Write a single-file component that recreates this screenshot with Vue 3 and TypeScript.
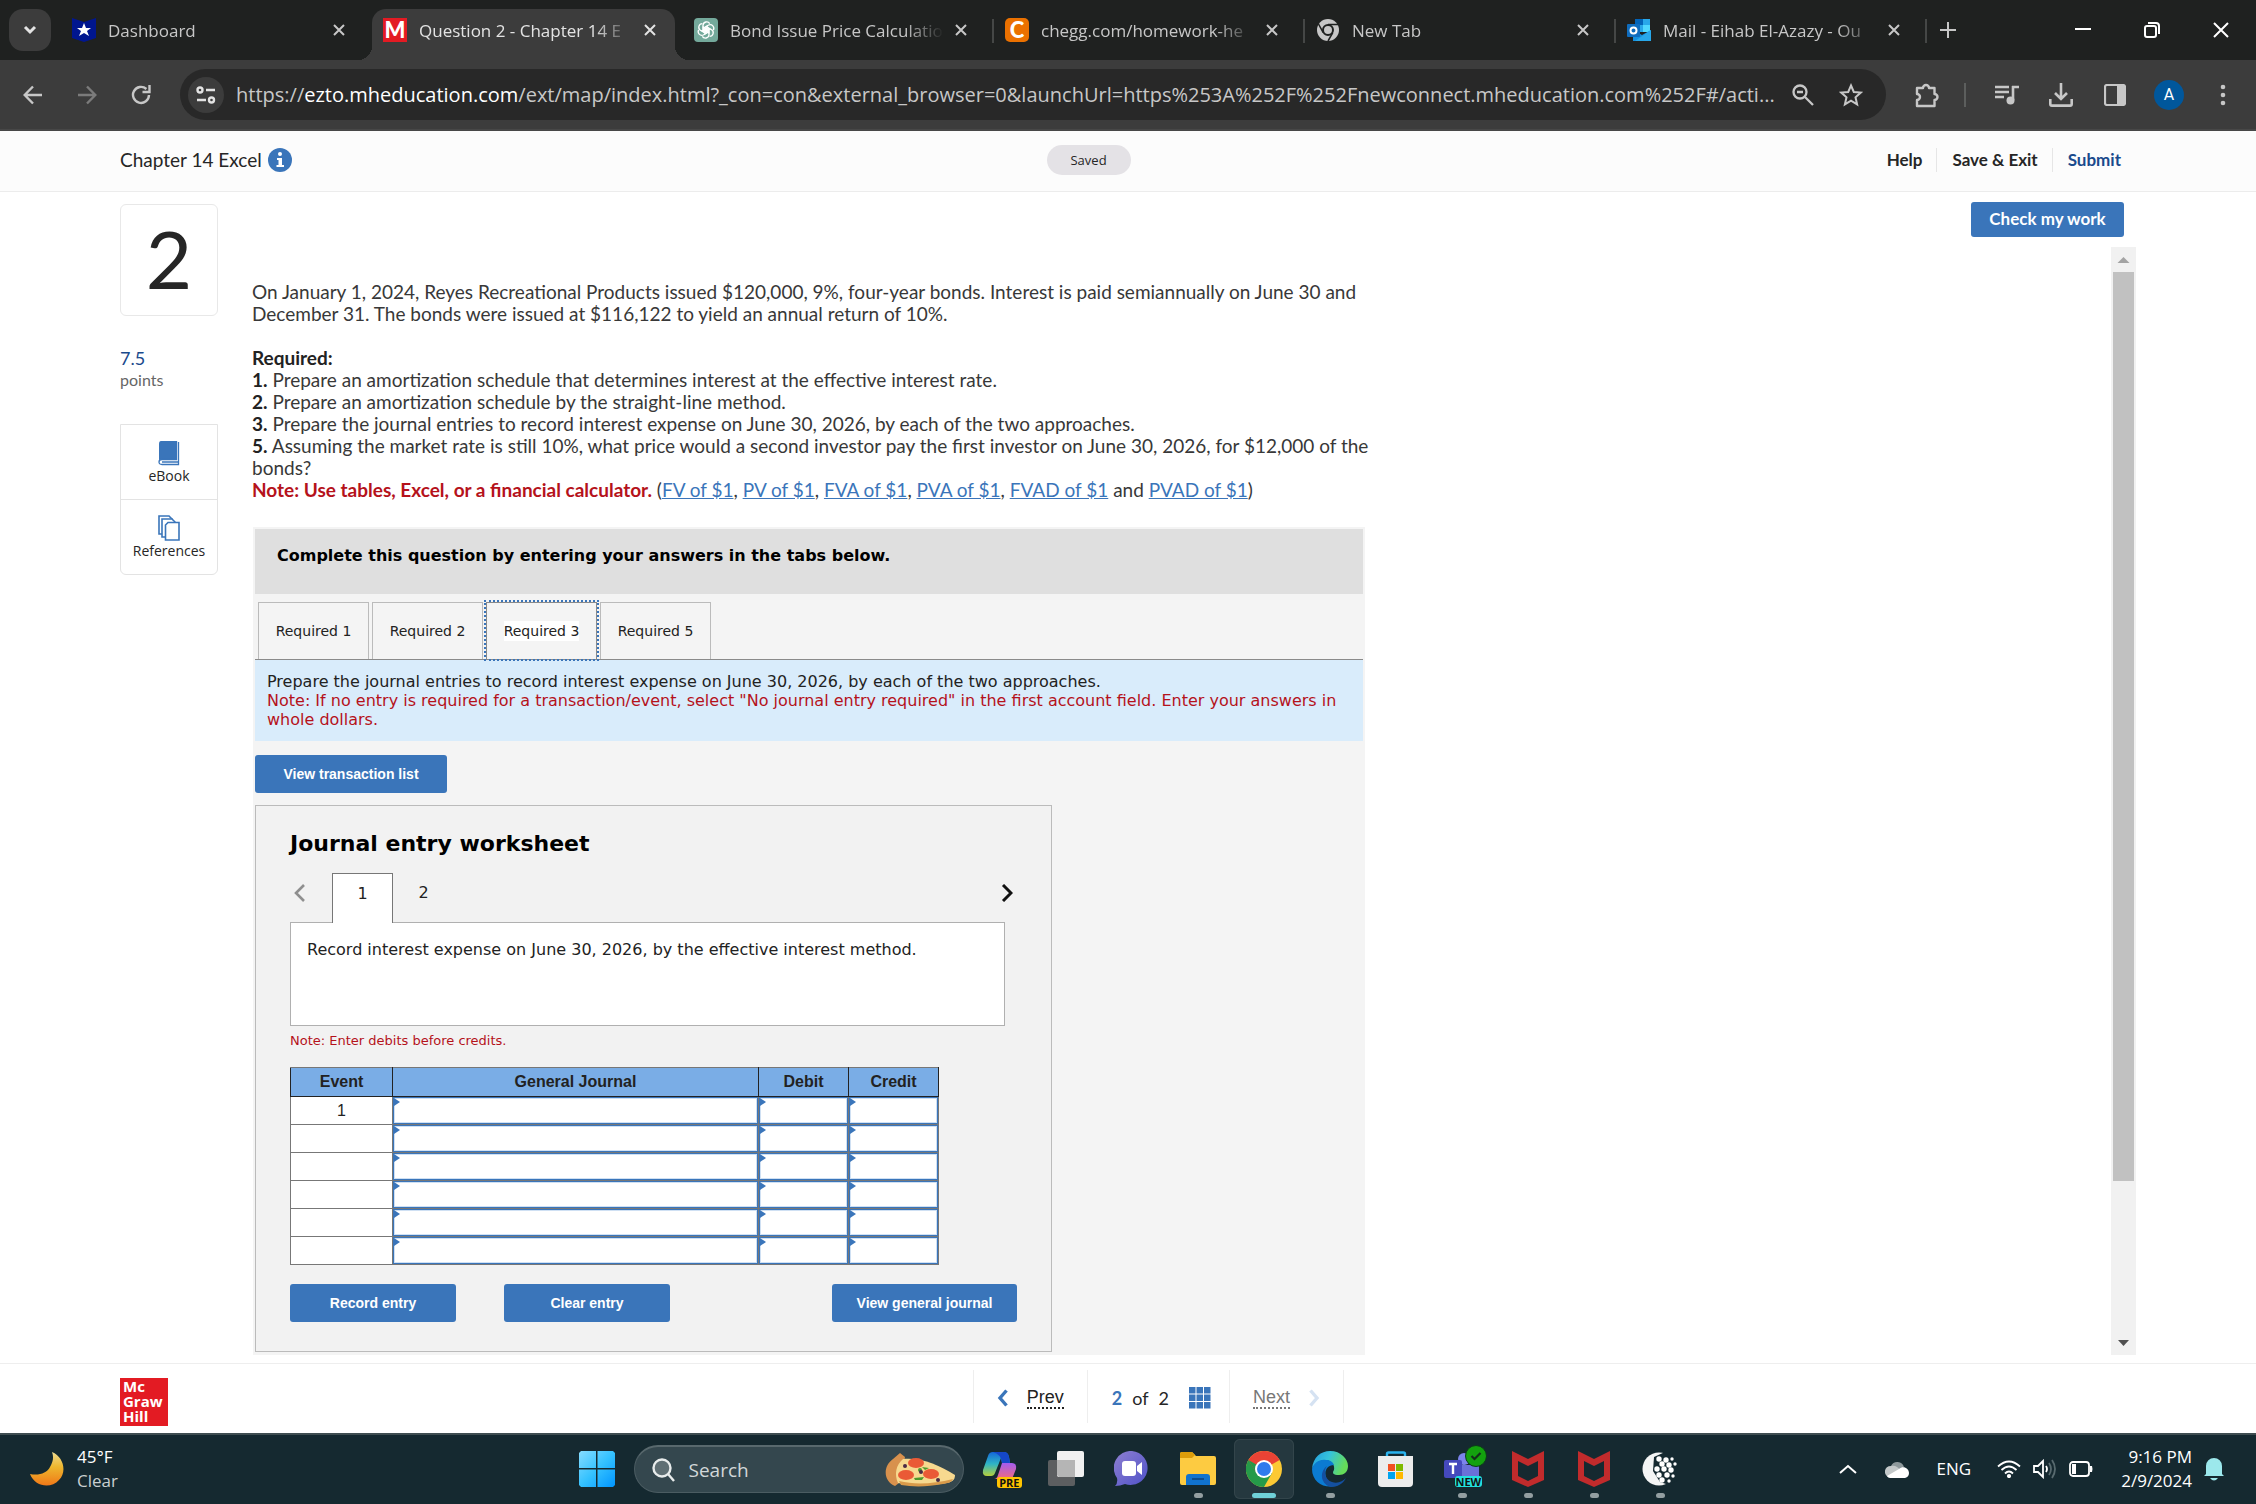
<script setup lang="ts">
import { ref } from 'vue'

interface BrowserTab {
  title: string
  icon: 'star' | 'mh' | 'gpt' | 'chegg' | 'chrome' | 'outlook'
  active?: boolean
  divider?: boolean
}

const browserTabs: BrowserTab[] = [
  { title: 'Dashboard', icon: 'star' },
  { title: 'Question 2 - Chapter 14 E', icon: 'mh', active: true },
  { title: 'Bond Issue Price Calculatio', icon: 'gpt', divider: true },
  { title: 'chegg.com/homework-he', icon: 'chegg', divider: true },
  { title: 'New Tab', icon: 'chrome', divider: true },
  { title: 'Mail - Eihab El-Azazy - Ou', icon: 'outlook', divider: true },
]

const tableLinks = ['FV of $1', 'PV of $1', 'FVA of $1', 'PVA of $1', 'FVAD of $1', 'PVAD of $1']

const requirementTabs = ['Required 1', 'Required 2', 'Required 3', 'Required 5']
const currentRequirement = ref('Required 3')

const rows = ref(
  Array.from({ length: 6 }, (_, i) => ({ event: i === 0 ? '1' : '', account: '', debit: '', credit: '' })),
)
const fields = ['account', 'debit', 'credit'] as const

function clearEntry(): void {
  rows.value.forEach((row) => {
    row.account = row.debit = row.credit = ''
  })
}

/* Dots of the WebMoney globe: x, y, radius */
const globeDots = [
  [17, 8, 2], [24, 9, 2], [30, 8, 1], [20, 13, 2], [27, 14, 2], [33, 13, 1],
  [15, 18, 2], [22, 18, 2], [29, 19, 2], [17, 24, 2], [25, 24, 2], [31, 25, 1], [20, 29, 2], [27, 30, 1],
]
</script>

<template>
  <div class="screen">
    <header class="tabstrip">
      <button class="tab-menu" aria-label="Search tabs">
        <svg width="14" height="10" viewBox="0 0 14 10"><path d="M2 2l5 5 5-5" fill="none" stroke="#e3e3e3" stroke-width="3" /></svg>
      </button>
      <div v-for="tab in browserTabs" :key="tab.title" class="btab" :class="{ active: tab.active, divider: tab.divider }">
        <svg v-if="tab.icon === 'star'" class="fav" viewBox="0 0 24 24">
          <path d="M0 0l12 4L24 0v20l-12 4L0 20z" fill="#00168f" />
          <path d="M12 5l2 5h5l-4 3 2 5-5-3-5 3 2-5-4-3h5z" fill="#fff" />
        </svg>
        <span v-else-if="tab.icon === 'mh'" class="fav letter mh">M</span>
        <svg v-else-if="tab.icon === 'gpt'" class="fav" viewBox="0 0 24 24">
          <rect width="24" height="24" rx="4" fill="#74a99b" />
          <g fill="none" stroke="#fff" stroke-width="1.3">
            <path v-for="n in 6" :key="n" :transform="`rotate(${n * 60} 12 12)`" d="M9 13.600V7.200a3.600 3.600 0 0 1 6.700-1.500M9.200 9.400l5.600 3.200v3.200" />
          </g>
        </svg>
        <span v-else-if="tab.icon === 'chegg'" class="fav letter chegg">C</span>
        <svg v-else-if="tab.icon === 'chrome'" class="fav" viewBox="0 0 24 24">
          <circle cx="12" cy="12" r="11" fill="#c7c7c7" />
          <path d="M12 6.500h10M7.200 14.700L2.500 6M16.800 14.700L12 23" stroke="#1f2120" stroke-width="1.500" />
          <circle cx="12" cy="12" r="5" fill="#c7c7c7" stroke="#1f2120" stroke-width="2" />
        </svg>
        <svg v-else class="fav" viewBox="0 0 24 24">
          <path d="M8 1h15v13H8z" fill="#28a8ea" /><path d="M8 1h8v6H8z" fill="#0364b8" />
          <path d="M16 7h7v7h-7z" fill="#50d9ff" /><path d="M6 12l9 5 9-5v11H6z" fill="#1490df" />
          <path d="M24 12v11H8z" fill="#28a8ea" /><rect y="6" width="13" height="13" rx="1" fill="#0f6cbd" />
          <circle cx="6.500" cy="12.500" r="3" fill="none" stroke="#fff" stroke-width="2" />
        </svg>
        <span class="btab-title">{{ tab.title }}</span>
        <button class="btab-close" aria-label="Close tab">
          <svg width="14" height="14" viewBox="0 0 14 14"><path d="M2 2l10 10M12 2L2 12" stroke="currentColor" stroke-width="2" /></svg>
        </button>
      </div>
      <button class="new-tab" aria-label="New tab">
        <svg width="16" height="16" viewBox="0 0 16 16"><path d="M8 0v16M0 8h16" stroke="#c7c7c7" stroke-width="2" /></svg>
      </button>
      <div class="window-controls">
        <button aria-label="Minimize"><svg width="16" height="16" viewBox="0 0 16 16"><path d="M0 7h16" stroke="#fff" stroke-width="2" /></svg></button>
        <button aria-label="Restore"><svg width="16" height="16" viewBox="0 0 16 16" fill="none" stroke="#fff" stroke-width="2"><rect x="1" y="4" width="11" height="11" rx="2" /><path d="M4 1h8q3 0 3 3v8" /></svg></button>
        <button aria-label="Close"><svg width="16" height="16" viewBox="0 0 16 16"><path d="M1 1l14 14M15 1L1 15" stroke="#fff" stroke-width="2" /></svg></button>
      </div>
    </header>

    <nav class="toolbar" aria-label="Browser toolbar">
      <button class="tool" aria-label="Back"><svg width="20" height="20" viewBox="0 0 20 20" fill="none" stroke="#c7c7c7" stroke-width="2.400"><path d="M19 10H2M10 1.500L1.700 10l8.300 8.500" /></svg></button>
      <button class="tool" aria-label="Forward"><svg width="20" height="20" viewBox="0 0 20 20" fill="none" stroke="#7b7b7b" stroke-width="2.400"><path d="M1 10h17M10 1.500l8.300 8.500-8.300 8.500" /></svg></button>
      <button class="tool" aria-label="Reload"><svg width="20" height="20" viewBox="0 0 20 20" fill="none" stroke="#c7c7c7" stroke-width="2.400"><path d="M18 10a8 8 0 1 1-2.600-6" /><path d="M18.500 0v7h-7" /></svg></button>
      <div class="omnibox">
        <button class="site-info" aria-label="Site information">
          <svg width="20" height="18" viewBox="0 0 20 18" fill="none" stroke="#e3e3e3" stroke-width="2.400"><circle cx="4" cy="4" r="2.500" /><path d="M10 4h9M1 14h9" /><circle cx="15.500" cy="14" r="2.500" /></svg>
        </button>
        <div class="url">https://<b>ezto.mheducation.com</b>/ext/map/index.html?_con=con&amp;external_browser=0&amp;launchUrl=https%253A%252F%252Fnewconnect.mheducation.com%252F#/acti...</div>
        <button class="tool" aria-label="Zoom"><svg width="22" height="22" viewBox="0 0 22 22" fill="none" stroke="#c7c7c7" stroke-width="2.300"><circle cx="8" cy="8" r="6.500" /><path d="M13 13l8 8M5 8h6" /></svg></button>
        <button class="tool" aria-label="Bookmark"><svg width="24" height="24" viewBox="0 0 24 24" fill="none" stroke="#c7c7c7" stroke-width="2"><path d="M12 2.500l2.800 6.500 7 .600-5.300 4.700 1.600 7L12 17.600l-6.100 3.700 1.600-7L2.200 9.600l7-.600z" /></svg></button>
      </div>
      <button class="tool ext" aria-label="Extensions"><svg width="26" height="26" viewBox="0 0 26 26"><path d="M3 6h6a3 3 0 0 1 6 0h5.500v6a3 3 0 0 1 0 6v6H3v-6a3 3 0 0 0 0-6z" fill="none" stroke="#c7c7c7" stroke-width="2.400" stroke-linejoin="round" /></svg></button>
      <span class="tool-divider"></span>
      <button class="tool" aria-label="Media"><svg width="24" height="20" viewBox="0 0 24 20"><path d="M0 2h14M0 7h14M0 12h9" stroke="#c7c7c7" stroke-width="2.400" /><path d="M18 1v14M17 2h7" stroke="#c7c7c7" stroke-width="2.600" /><circle cx="15.500" cy="15.500" r="4" fill="#c7c7c7" /></svg></button>
      <button class="tool" aria-label="Downloads"><svg width="24" height="24" viewBox="0 0 24 24" fill="none" stroke="#c7c7c7" stroke-width="2.600"><path d="M12 0v15M6 10l6 6 6-6M1.300 16v5q0 1.600 1.600 1.600h18.200q1.600 0 1.600-1.600v-5" /></svg></button>
      <button class="tool" aria-label="Side panel"><svg width="22" height="22" viewBox="0 0 22 22"><rect x="1" y="1" width="20" height="20" rx="2" fill="none" stroke="#c7c7c7" stroke-width="2.200" /><path d="M13 1h8v20h-8z" fill="#c7c7c7" /></svg></button>
      <button class="tool" aria-label="Profile"><span class="avatar">A</span></button>
      <button class="tool" aria-label="Menu"><svg width="6" height="22" viewBox="0 0 6 22" fill="#c7c7c7"><circle cx="3" cy="3" r="2.300" /><circle cx="3" cy="11" r="2.300" /><circle cx="3" cy="19" r="2.300" /></svg></button>
    </nav>

    <header class="app-header">
      <h1 class="chapter">Chapter 14 Excel
        <svg width="24" height="24" viewBox="0 0 24 24"><circle cx="12" cy="12" r="12" fill="#3a75ba" /><circle cx="12" cy="6" r="2" fill="#fff" /><path d="M9 10h5v7h2v2H8.500v-2h2v-5H9z" fill="#fff" /></svg>
      </h1>
      <span class="saved">Saved</span>
      <div class="header-links">
        <button>Help</button>
        <button>Save &amp; Exit</button>
        <button class="submit">Submit</button>
      </div>
    </header>

    <main class="workspace">
      <aside class="rail">
        <div class="number">2</div>
        <p class="points"><span>7.5</span><br />points</p>
        <div class="resources">
          <button>
            <svg width="22" height="26" viewBox="0 0 22 26"><path d="M3 1h15v18H4q-3 0-3 3V4q0-3 2-3z" fill="#3a75ba" /><path d="M20.500 2v22.500H4q-3 0-3-2.500t3-2.500h14.500V1M4 22h16" fill="none" stroke="#3a75ba" stroke-width="1.300" /></svg>
            eBook
          </button>
          <button>
            <svg width="22" height="26" viewBox="0 0 22 26" fill="#fff" stroke="#3a75ba" stroke-width="1.600"><path d="M1 1h10l3 3v15H1z" /><path d="M4 4h10l3 3v15H4z" /><path d="M10 7.500h11V25H7.500V10z" /></svg>
            References
          </button>
        </div>
      </aside>

      <section class="question">
        <button class="primary check">Check my work</button>
        <div class="scroller">
          <article class="sheet">
            <p class="prose">On January 1, 2024, Reyes Recreational Products issued $120,000, 9%, four-year bonds. Interest is paid semiannually on June 30 and<br />December 31. The bonds were issued at $116,122 to yield an annual return of 10%.</p>
            <p class="prose">
              <strong>Required:</strong><br />
              <strong>1.</strong> Prepare an amortization schedule that determines interest at the effective interest rate.<br />
              <strong>2.</strong> Prepare an amortization schedule by the straight-line method.<br />
              <strong>3.</strong> Prepare the journal entries to record interest expense on June 30, 2026, by each of the two approaches.<br />
              <strong>5.</strong> Assuming the market rate is still 10%, what price would a second investor pay the first investor on June 30, 2026, for $12,000 of the<br />bonds?<br />
              <strong class="alert">Note: Use tables, Excel, or a financial calculator.</strong>
              (<template v-for="(link, i) in tableLinks" :key="link"><a href="#">{{ link }}</a><template v-if="i < 4">, </template><template v-else-if="i === 4"> and </template></template>)
            </p>

            <div class="panel">
              <h2 class="panel-head">Complete this question by entering your answers in the tabs below.</h2>
              <div class="req-tabs" role="tablist">
                <button
                  v-for="name in requirementTabs" :key="name" role="tab"
                  :aria-selected="name === currentRequirement" :class="{ current: name === currentRequirement }"
                  @click="currentRequirement = name"
                ><span>{{ name }}</span></button>
              </div>
              <p class="instructions">Prepare the journal entries to record interest expense on June 30, 2026, by each of the two approaches.<br />
                <span>Note: If no entry is required for a transaction/event, select "No journal entry required" in the first account field. Enter your answers in<br />whole dollars.</span>
              </p>
              <button class="primary action view-list">View transaction list</button>

              <div class="worksheet">
                <h3>Journal entry worksheet</h3>
                <div class="pager">
                  <button class="arrow" aria-label="Previous entry"><svg width="12" height="18" viewBox="0 0 12 18"><path d="M10 1L2 9l8 8" fill="none" stroke="#8f8f8f" stroke-width="2.600" /></svg></button>
                  <button class="page current">1</button>
                  <button class="page">2</button>
                  <button class="arrow next" aria-label="Next entry"><svg width="12" height="18" viewBox="0 0 12 18"><path d="M2 1l8 8-8 8" fill="none" stroke="#111" stroke-width="3" /></svg></button>
                </div>
                <div class="transaction">Record interest expense on June 30, 2026, by the effective interest method.</div>
                <p class="hint">Note: Enter debits before credits.</p>
                <table>
                  <thead>
                    <tr><th class="c-event">Event</th><th class="c-journal">General Journal</th><th class="c-amount">Debit</th><th class="c-amount">Credit</th></tr>
                  </thead>
                  <tbody>
                    <tr v-for="(row, r) in rows" :key="r">
                      <td class="event">{{ row.event }}</td>
                      <td v-for="field in fields" :key="field" class="cell"><input v-model="row[field]" :aria-label="`${field}, row ${r + 1}`" /></td>
                    </tr>
                  </tbody>
                </table>
                <div class="actions">
                  <button class="primary action entry">Record entry</button>
                  <button class="primary action entry" @click="clearEntry">Clear entry</button>
                  <button class="primary action general">View general journal</button>
                </div>
              </div>
            </div>
          </article>
          <div class="scrollbar" aria-hidden="true">
            <svg width="25" height="25" viewBox="0 0 25 25"><path d="M12.500 10l6 6h-12z" fill="#a3a3a3" /></svg>
            <span class="thumb"></span>
            <svg width="25" height="25" viewBox="0 0 25 25"><path d="M7 10h11l-5.500 6z" fill="#505050" /></svg>
          </div>
        </div>
      </section>
    </main>

    <footer class="app-footer">
      <div class="logo">Mc<br />Graw<br />Hill</div>
      <nav class="question-nav" aria-label="Questions">
        <a href="#" class="prev"><svg width="12" height="18" viewBox="0 0 12 18"><path d="M9.500 1.500L3 9l6.500 7.500" fill="none" stroke="#3a75ba" stroke-width="3.400" /></svg><span>Prev</span></a>
        <div class="count"><b>2</b><span>of</span><i>2</i>
          <svg width="22" height="22" viewBox="0 0 22 22" fill="#3a75ba"><template v-for="y in 3" :key="y"><rect v-for="x in 3" :key="x" :x="(x - 1) * 7.500" :y="(y - 1) * 7.500" width="6.500" height="6.500" /></template></svg>
        </div>
        <a href="#" class="next"><span>Next</span><svg width="12" height="18" viewBox="0 0 12 18"><path d="M2.500 1.500L9 9l-6.500 7.500" fill="none" stroke="#d5e2f2" stroke-width="3.400" /></svg></a>
      </nav>
    </footer>

    <footer class="taskbar">
      <div class="weather">
        <svg width="34" height="34" viewBox="0 0 34 34">
          <defs><linearGradient id="moon" x1="0" y1="0" x2="0" y2="1"><stop offset="0" stop-color="#f0dc90" /><stop offset=".45" stop-color="#edb62d" /><stop offset="1" stop-color="#f07818" /></linearGradient></defs>
          <path d="M22 0C34 5 37 20 29 28 21 37 5 35 0 22c9 2 17-1 20-7 3-5 4-10 2-15z" fill="url(#moon)" />
        </svg>
        <div>45°F<br /><span>Clear</span></div>
      </div>
      <div class="apps">
        <button class="app start" aria-label="Start">
          <svg width="36" height="36" viewBox="0 0 36 36">
            <defs><linearGradient id="win" x1="0" y1="0" x2="1" y2="1"><stop offset="0" stop-color="#86dcff" /><stop offset=".5" stop-color="#35c2ff" /><stop offset="1" stop-color="#0095ff" /></linearGradient></defs>
            <path d="M2 0h15v17H0V2zM18.500 0H34l2 2v15H18.500zM0 18.500h17V36H2l-2-2zM18.500 18.500H36V34l-2 2H18.500z" fill="url(#win)" />
          </svg>
        </button>
        <label class="search">
          <svg width="24" height="24" viewBox="0 0 24 24" fill="none" stroke="#e8ecec" stroke-width="2.400"><circle cx="10" cy="10" r="8.500" fill="#5f6f74" /><path d="M16 16l6 7" /></svg>
          <input placeholder="Search" aria-label="Search" />
          <svg width="70" height="34" viewBox="0 0 70 34">
            <path d="M8 6l7-6 5 4-1 5C13 13 12 22 14 30l-4 3C-1 29-3 14 8 6z" fill="#d8914d" />
            <path d="M18 6c18-2 36 6 52 16 0 5-3 7-8 8-18 3-34 3-49 0-4-9-2-18 5-24z" fill="#f7d98f" />
            <path d="M14 28c16 4 34 3 54-2-2 4-5 4-10 5-16 3-30 3-42 1z" fill="#d99a4a" />
            <g fill="#ea5a36"><ellipse cx="31" cy="10" rx="8" ry="5" /><ellipse cx="21" cy="22" rx="8" ry="5" /><ellipse cx="46" cy="21" rx="8" ry="5" /></g>
            <g fill="#4d9a2c"><circle cx="35" cy="17" r="2" /><path d="M29 25l10-1-2 3h-7z" /><path d="M37 14l7 1-4 2z" /></g>
            <g fill="#4b2b45"><circle cx="20" cy="13" r="2" /><circle cx="36" cy="19" r="2" /><circle cx="53" cy="27" r="2" /></g>
          </svg>
        </label>
        <button class="app" aria-label="Copilot">
          <svg width="36" height="36" viewBox="0 0 36 36">
            <defs>
              <linearGradient id="cpa" x1="0" y1="0" x2="0" y2="1"><stop offset="0" stop-color="#1467d8" /><stop offset=".5" stop-color="#2fb5c5" /><stop offset="1" stop-color="#b6cf3a" /></linearGradient>
              <linearGradient id="cpb" x1="0" y1="0" x2="0" y2="1"><stop offset="0" stop-color="#a35cf0" /><stop offset="1" stop-color="#f06a7e" /></linearGradient>
            </defs>
            <path d="M11 1h11q4 0 5 5l1 6h-8l-1-5-6 15q-1 3-4 3H5q-5 0-4-6L6 5q1-4 5-4z" fill="url(#cpa)" />
            <path d="M11 1h11q4 0 5 5l1 6h-8q-1-9-9-11z" fill="#1547c8" />
            <path d="M20 12h10q5 0 4 6l-4 10H12q3 0 4-4z" fill="url(#cpb)" />
          </svg>
          <span class="tag pre">PRE</span>
        </button>
        <button class="app" aria-label="Task view">
          <svg width="36" height="36" viewBox="0 0 36 36"><rect y="9" width="27" height="26" rx="2" fill="#5c5e60" /><rect x="9" width="27" height="26" rx="2" fill="#f1f1f1" /><path d="M9 9h18v17H11l-2-2z" fill="#b5b5b5" /></svg>
        </button>
        <button class="app" aria-label="Chat">
          <svg width="36" height="36" viewBox="0 0 36 36"><defs><linearGradient id="chat" x1="0" y1="0" x2="1" y2="1"><stop offset="0" stop-color="#8e7fd0" /><stop offset="1" stop-color="#4f52c9" /></linearGradient></defs><path d="M18 0a17 17 0 1 1-7 33q-5 2-10 2 3-3 2-8A17 17 0 0 1 18 0z" fill="url(#chat)" /><rect x="8" y="10" width="14" height="15" rx="3" fill="#fff" /><path d="M23 15l5-4v13l-5-4z" fill="#fff" /></svg>
        </button>
        <button class="app running" aria-label="File Explorer">
          <svg width="36" height="36" viewBox="0 0 36 36"><path d="M0 3q0-2 2-2h10l4 4h18q2 0 2 2v25q0 2-2 2H2q-2 0-2-2z" fill="#fdcb41" /><path d="M0 3q0-2 2-2h10l3 3-3 3H0z" fill="#dd9d0a" /><path d="M6 34V26q0-3 3-3h18q3 0 3 3v8z" fill="#1173cf" /><path d="M12 28h12" stroke="#0b4d92" stroke-width="2" /></svg>
        </button>
        <button class="app focused" aria-label="Chrome">
          <svg width="36" height="36" viewBox="0 0 36 36"><circle cx="18" cy="18" r="18" fill="#fcc934" /><path d="M18 18L2.400 9A18 18 0 0 1 33.600 9z" fill="#ea4335" /><path d="M2.400 9a18 18 0 0 0 15.600 27l8-14-8-4z" fill="#259a49" /><path d="M18 9h15.600L18 4 2.400 9l8 13z" fill="#ea4335" /><path d="M2.400 9l8 13L18 18z" fill="#259a49" /><circle cx="18" cy="18" r="9" fill="#fff" /><circle cx="18" cy="18" r="7" fill="#2f7bed" /></svg>
        </button>
        <button class="app running" aria-label="Edge">
          <svg width="36" height="36" viewBox="0 0 36 36">
            <defs><linearGradient id="edge" x1="0" y1="0" x2="1" y2=".3"><stop offset="0" stop-color="#219bdf" /><stop offset=".5" stop-color="#36c3da" /><stop offset="1" stop-color="#65dc59" /></linearGradient></defs>
            <path d="M0 18C1 6 9 0 18 0c11 0 18 8 18 15 0 6-4 9-9 9-6 0-7-2-5-5 1-5-2-9-8-10C7 9 2 13 0 18z" fill="url(#edge)" />
            <path d="M0 18C2 12 7 8 14 9c4 0 7 2 8 5-7 0-10 6-8 12 2 5 7 9 12 8-12 5-26-2-26-16z" fill="#0b7bd2" />
            <path d="M15 15c-4 5-2 14 5 16 6 2 11-1 14-4-3 6-9 9-15 9-9-2-13-14-4-21z" fill="#1450a0" />
          </svg>
        </button>
        <button class="app" aria-label="Microsoft Store">
          <svg width="36" height="36" viewBox="0 0 36 36"><path d="M9 7V3q0-1.500 1.500-1.500h15Q27 1.500 27 3v4" fill="none" stroke="#2bb3ee" stroke-width="2.400" /><path d="M0 5h35v27q0 4-4 4H4q-4 0-4-4z" fill="#ececec" /><path d="M10 13h7v7h-7z" fill="#f25022" /><path d="M18 13h7v7h-7z" fill="#7fba00" /><path d="M10 21h7v7h-7z" fill="#00a4ef" /><path d="M18 21h7v7h-7z" fill="#ffb900" /></svg>
        </button>
        <button class="app running" aria-label="Teams">
          <svg width="36" height="36" viewBox="0 0 36 36"><circle cx="20" cy="8" r="6" fill="#7b83eb" /><path d="M13 14h22v15q0 4-4 4H13z" fill="#6a70d8" /><rect y="9" width="18" height="18" rx="2" fill="#4549bd" /><path d="M5 13h8M9 13v10" stroke="#fff" stroke-width="2.400" /></svg>
          <span class="tag new">NEW</span>
          <svg class="status" width="22" height="22" viewBox="0 0 22 22"><circle cx="11" cy="11" r="10.500" fill="#13a10e" stroke="#0c3b1a" /><path d="M6.500 11l3 3 6-6" fill="none" stroke="#12301a" stroke-width="2.200" /></svg>
        </button>
        <button v-for="n in 2" :key="n" class="app running" aria-label="McAfee">
          <svg width="36" height="36" viewBox="0 0 36 36"><path fill-rule="evenodd" d="M2 0l16 8 16-8v29l-16 7-16-7zM8 10v15l10 5 10-5V10l-10 5z" fill="#c12b2c" /></svg>
        </button>
        <button class="app running" aria-label="WebMoney">
          <svg width="36" height="36" viewBox="0 0 36 36"><circle cx="17" cy="18" r="16.500" fill="#f4f5f5" /><path d="M12 6l11-5h13v28l-9 5-9-3-7-11z" fill="#152930" /><circle v-for="(d, i) in globeDots" :key="i" :cx="d[0]" :cy="d[1]" :r="d[2] + 0.700" fill="#fff" /></svg>
        </button>
      </div>
      <div class="tray">
        <svg class="up" width="18" height="10" viewBox="0 0 18 10"><path d="M1 9l8-7 8 7" fill="none" stroke="#fff" stroke-width="2" /></svg>
        <svg class="cloud" width="24" height="18" viewBox="0 0 24 18"><path d="M6 6a7 7 0 0 1 13 1l-7 5z" fill="#8d989b" /><path d="M6 6c4-1 7 1 9 4L3 17C-2 14-1 6 6 6z" fill="#c3c8c9" /><path d="M14 9c4-4 10-1 10 4q0 4-4 5H5q-2 0-3-2z" fill="#fff" /></svg>
        <span class="lang">ENG</span>
        <svg width="24" height="18" viewBox="0 0 24 18" fill="none" stroke="#fff" stroke-width="1.800"><path d="M1 6.500q11-10 22 0M4.500 10q7.500-7 15 0M8 13.500q4-4 8 0" /><circle cx="12" cy="16" r="1.200" fill="#fff" /></svg>
        <svg width="24" height="20" viewBox="0 0 24 20" fill="none" stroke="#fff" stroke-width="1.800"><path d="M1 7h4l5-5v16l-5-5H1zM13 7q2 3 0 6" /><path d="M16 4q4 6 0 12M19 1q6 9 0 18" stroke="#586a6f" /></svg>
        <svg width="24" height="18" viewBox="0 0 24 18"><rect x="1" y="2" width="19" height="14" rx="3" fill="none" stroke="#fff" stroke-width="1.800" /><path d="M3 4h4v10H3zM21 6h2q1 3 0 6h-2z" fill="#fff" /></svg>
        <div class="clock">9:16 PM<br />2/9/2024</div>
        <svg width="20" height="24" viewBox="0 0 20 24" fill="#9ce8ec"><path d="M2 17V9a8 8 0 0 1 16 0v8l2 2H0zM6 21h8q-4 5-8 0z" /></svg>
      </div>
    </footer>
  </div>
</template>

<style>
body {
  background: #fff;
}
</style>

<style scoped>
* {
  box-sizing: border-box;
}
h1, h2, h3, p {
  margin: 0;
  font-weight: 400;
}
button {
  padding: 0;
  border: 0;
  background: none;
  color: inherit;
  font: inherit;
  cursor: pointer;
}
svg {
  display: block;
  flex: none;
}
.screen {
  display: flex;
  flex-direction: column;
  min-height: 100vh;
  font-family: Lato, sans-serif;
  color: #262626;
}

/* Browser tab strip */
.tabstrip {
  display: flex;
  align-items: flex-end;
  height: 60px;
  background: #1f2120;
  color: #c7c7c7;
  font: 17px/28px "Open Sans", sans-serif;
}
.tab-menu {
  display: grid;
  place-items: center;
  width: 42px;
  height: 42px;
  margin: 0 10px 9px 9px;
  border-radius: 14px;
  background: #3c3c3c;
}
.btab {
  position: relative;
  display: flex;
  align-items: center;
  width: 303px;
  height: 51px;
  margin-right: 8px;
  padding: 0 12px 9px 11px;
}
.btab.active {
  border-radius: 14px 14px 0 0;
  background: #3c3c3c;
  color: #e3e3e3;
}
.btab.active::before,
.btab.active::after {
  content: "";
  position: absolute;
  bottom: 0;
  width: 14px;
  height: 14px;
}
.btab.active::before {
  right: 100%;
  background: radial-gradient(circle at 0 0, #1f2120 14px, #3c3c3c 14px);
}
.btab.active::after {
  left: 100%;
  background: radial-gradient(circle at 100% 0, #1f2120 14px, #3c3c3c 14px);
}
.btab.divider::after {
  content: "";
  position: absolute;
  right: -8px;
  top: 10px;
  width: 2px;
  height: 24px;
  background: #454746;
}
.fav {
  flex: none;
  width: 24px;
  height: 24px;
}
.letter {
  color: #fff;
  font: 900 22px/24px Lato, sans-serif;
  text-align: center;
}
.mh {
  background: #e31b23;
}
.chegg {
  border-radius: 5px;
  background: #eb7100;
}
.btab-title {
  flex: 1;
  margin-left: 12px;
  padding-top: 2px;
  overflow: hidden;
  white-space: nowrap;
  mask-image: linear-gradient(to right, #000 80%, transparent 98%);
}
.btab-close {
  padding: 6px;
}
.new-tab {
  margin: 0 0 22px 13px;
}
.window-controls {
  display: flex;
  gap: 53px;
  margin: 0 27px 22px auto;
}

/* Browser toolbar */
.toolbar {
  display: flex;
  align-items: center;
  height: 71px;
  padding: 0 6px;
  border-bottom: 2px solid #474747;
  background: #3c3c3c;
}
.tool {
  display: grid;
  place-items: center;
  width: 54px;
  height: 48px;
}
.omnibox {
  display: flex;
  flex: 1;
  align-items: center;
  min-width: 0;
  height: 51px;
  margin-left: 12px;
  padding: 0 11px 0 8px;
  border-radius: 26px;
  background: #282828;
}
.omnibox .tool {
  width: 48px;
}
.site-info {
  display: grid;
  place-items: center;
  width: 36px;
  height: 36px;
  border-radius: 50%;
  background: #3c3c3c;
}
.url {
  flex: 1;
  min-width: 0;
  margin-left: 12px;
  overflow: hidden;
  white-space: nowrap;
  color: #c7c7c7;
  font: 20px/30px "Open Sans", sans-serif;
}
.url b {
  color: #fff;
  font-weight: 400;
}
.ext {
  margin-left: 14px;
}
.tool-divider {
  width: 2px;
  height: 24px;
  margin: 0 14px 0 10px;
  background: #5c5e5d;
}
.avatar {
  width: 30px;
  height: 30px;
  border-radius: 50%;
  background: #00579c;
  color: #fff;
  font: 16px/30px Roboto, sans-serif;
}

/* Assignment header */
.app-header {
  display: grid;
  grid-template-columns: 29fr auto 31fr;
  align-items: center;
  height: 61px;
  padding: 0 135px 2px 120px;
  border-bottom: 1px solid #ececec;
  background: #fcfcfc;
}
.chapter {
  display: flex;
  gap: 6px;
  font-size: 19px;
}
.saved {
  width: 84px;
  border-radius: 15px;
  background: #e4e2e6;
  font: 13px/30px "Open Sans", sans-serif;
  text-align: center;
}
.header-links {
  display: flex;
  justify-content: flex-end;
  font-size: 17px;
  font-weight: 700;
  line-height: 24px;
}
.header-links button + button {
  margin-left: 14px;
  padding-left: 15px;
  border-left: 1px solid #e6e6e6;
}
.header-links .submit {
  color: #1a4a8c;
}

/* Question area */
.workspace {
  display: flex;
  flex: 1;
  align-items: flex-start;
  gap: 34px;
  padding: 0 120px;
}
.rail {
  flex: none;
  width: 98px;
  padding-top: 12px;
}
.number {
  padding-bottom: 4px;
  border: 1px solid #e8e8e8;
  border-radius: 6px;
  font-size: 80px;
  line-height: 106px;
  text-align: center;
}
.points {
  margin: 32px 0 34px;
  color: #666;
  font-size: 16px;
  line-height: 21px;
}
.points span {
  color: #1a4a8c;
  font-size: 18px;
}
.resources {
  border: 1px solid #e3e3e3;
  border-radius: 0 0 6px 6px;
}
.resources button {
  display: flex;
  flex-direction: column;
  align-items: center;
  width: 100%;
  height: 74px;
  padding-top: 15px;
  font: 14px/20px "Open Sans", sans-serif;
}
.resources button + button {
  height: 75px;
  border-top: 1px solid #e3e3e3;
}
.question {
  display: flex;
  flex: 1;
  flex-direction: column;
  min-width: 0;
}
.primary {
  border-radius: 3px;
  background: #3a75ba;
  color: #fff;
  font-weight: 700;
}
.check {
  align-self: flex-end;
  width: 153px;
  height: 35px;
  margin: 10px 12px 10px 0;
  padding-bottom: 2px;
  font-size: 17px;
}
.scroller {
  display: flex;
  justify-content: space-between;
}
.sheet {
  flex: 0 1 1122px;
  padding-top: 34px;
}
.prose {
  margin-bottom: 22px;
  color: #383838;
  font-size: 19px;
  line-height: 22px;
  white-space: nowrap;
}
.prose strong {
  color: #222;
  font-weight: 700;
}
.prose .alert {
  color: #b5121b;
}
.prose a {
  color: #3a75ba;
}
.panel {
  max-width: 1112px;
  margin: 26px 0 0 1px;
  padding: 2px 2px 3px;
  background: #f4f4f4;
  font-family: "DejaVu Sans", sans-serif;
  color: #222;
}
.panel-head {
  height: 65px;
  padding: 17px 22px;
  background: #dfdfdf;
  color: #000;
  font-size: 16px;
  font-weight: 700;
  line-height: 20px;
}
.req-tabs {
  display: flex;
  gap: 3px;
  padding: 8px 3px 0;
  border-bottom: 1px solid #8a8a8a;
  font-size: 14px;
}
.req-tabs button {
  width: 111px;
  height: 57px;
  border: 1px solid #bbb;
  border-bottom: 0;
}
.req-tabs .current {
  border-color: #8a8a8a;
  outline: 2px dotted #3a75ba;
}
.req-tabs .current span {
  padding: 2px 0;
  background: #fff;
}
.instructions {
  padding: 12px;
  background: #d9ecfb;
  font-size: 16px;
  line-height: 19px;
  white-space: nowrap;
}
.instructions span,
.hint {
  color: #b5121b;
}
.action {
  height: 38px;
  font: 700 14px/20px "Liberation Sans", sans-serif;
}
.view-list {
  display: block;
  width: 192px;
  margin: 14px 0 12px;
}
.worksheet {
  max-width: 797px;
  padding: 24px 34px 29px;
  border: 1px solid #bbb;
  background: #f2f2f2;
}
.worksheet h3 {
  color: #000;
  font-size: 22px;
  font-weight: 700;
  line-height: 28px;
}
.pager {
  display: flex;
  align-items: flex-end;
  padding: 6px 4px 0;
  font-size: 16px;
}
.arrow {
  height: 58px;
}
.page {
  width: 61px;
  height: 49px;
  padding-bottom: 10px;
}
.page.current {
  z-index: 1;
  height: 50px;
  margin: 0 0 -1px 26px;
  border: 1px solid #777;
  border-bottom: 0;
  background: #fff;
}
.arrow.next {
  margin-left: auto;
}
.transaction {
  max-width: 715px;
  height: 104px;
  padding: 17px 16px;
  border: 1px solid #b0b0b0;
  background: #fff;
  font-size: 16px;
  line-height: 20px;
}
.hint {
  margin: 5px 0 16px;
  font-size: 13px;
  line-height: 20px;
}
table {
  width: 649px;
  border-collapse: collapse;
  table-layout: fixed;
  font: 16px/20px "Liberation Sans", sans-serif;
}
th,
td {
  padding: 0;
  border: 1px solid #777;
  text-align: center;
}
th {
  height: 29px;
  border-color: #777 #222 #222;
  background: #7aade6;
  font-weight: 700;
}
td {
  height: 27px;
  background: #fff;
}
.c-event {
  width: 102px;
}
.c-amount {
  width: 90px;
}
.cell {
  position: relative;
}
.cell input {
  display: block;
  width: 100%;
  height: 27px;
  padding: 0 8px;
  border: 1px solid #3a75ba;
  outline: 0;
  box-shadow: inset 0 0 0 1px #cfe0f3;
  font: inherit;
}
.cell::before {
  content: "";
  position: absolute;
  left: 1px;
  top: 1px;
  border: 4px solid transparent;
  border-left: 6px solid #3a75ba;
}
.actions {
  display: flex;
  max-width: 727px;
  margin: 19px -12px 0 0;
}
.entry {
  width: 166px;
  margin-right: 48px;
}
.general {
  width: 185px;
  margin-left: auto;
}
.scrollbar {
  display: flex;
  flex-direction: column;
  width: 25px;
  background: #f1f1f1;
}
.thumb {
  flex: none;
  height: 82%;
  margin: 0 2px;
  background: #c1c1c1;
}
.scrollbar svg:last-child {
  margin-top: auto;
}

/* Question navigation */
.app-footer {
  display: grid;
  grid-template-columns: 14fr auto 13fr;
  align-items: center;
  height: 70px;
  margin-top: 8px;
  padding: 6px 120px 0;
  border-top: 1px solid #eee;
}
.logo {
  width: 48px;
  height: 48px;
  padding: 1px 3px;
  background: #e31b23;
  color: #fff;
  font: 700 15px/15px "Open Sans", sans-serif;
}
.question-nav {
  display: flex;
  align-self: start;
  height: 53px;
  border: solid #eee;
  border-width: 0 1px;
  font: 18px/24px "Liberation Sans", sans-serif;
}
.question-nav > * {
  display: flex;
  align-items: center;
}
.question-nav a {
  gap: 18px;
  padding: 3px 23px 0;
  color: #222;
  text-decoration: none;
}
.question-nav a span {
  border-bottom: 2px dotted currentColor;
  line-height: 20px;
}
.question-nav .next {
  color: #777;
}
.question-nav .count {
  gap: 10px;
  padding: 3px 18px 0 24px;
  border: solid #eee;
  border-width: 0 1px;
  font-family: Lato, sans-serif;
}
.count b {
  color: #3a75ba;
}
.count i {
  margin-right: 10px;
  font-style: normal;
}

/* Taskbar */
.taskbar {
  display: grid;
  grid-template-columns: 1fr auto 1fr;
  align-items: center;
  height: 72px;
  padding-bottom: 2px;
  border-top: 2px solid #3f4d51;
  background: #152930;
  color: #fff;
  font: 17px/24px "Open Sans", sans-serif;
}
.weather {
  display: flex;
  align-items: center;
  gap: 13px;
  padding-left: 30px;
}
.weather span {
  color: #c9cfd1;
}
.apps {
  display: flex;
  align-items: center;
  padding-left: 12px;
}
.app {
  position: relative;
  display: grid;
  place-items: center;
  width: 60px;
  height: 60px;
  margin-left: 6px;
  border-radius: 6px;
}
.app.start {
  width: 36px;
  margin-left: 0;
}
.app.running::after,
.app.focused::after {
  content: "";
  position: absolute;
  left: 26px;
  bottom: 1px;
  width: 9px;
  height: 5px;
  border-radius: 3px;
  background: #939ea1;
}
.app.focused {
  background: #25383f;
  box-shadow: inset 0 0 0 1px #33454b;
}
.app.focused::after {
  left: 18px;
  width: 24px;
  background: #6fd0d8;
}
.tag {
  position: absolute;
  border-radius: 3px;
  color: #111;
  font: 700 11px/11px "Open Sans", sans-serif;
}
.pre {
  right: 8px;
  bottom: 11px;
  padding: 0 2px;
  background: #ffc400;
}
.new {
  left: 23px;
  bottom: 12px;
  padding: 0 1px;
  background: #22e0dd;
}
.status {
  position: absolute;
  left: 33px;
  top: 6px;
}
.search {
  display: flex;
  align-items: center;
  width: 330px;
  height: 48px;
  margin: 0 0 0 19px;
  padding: 0 8px 0 17px;
  border: 1px solid #4b5c62;
  border-top: 2px solid #58686d;
  border-radius: 24px;
  background: #34474e;
}
.search input {
  flex: 1;
  min-width: 0;
  margin-left: 13px;
  padding: 0;
  border: 0;
  outline: 0;
  background: none;
  font: 19px/24px "Open Sans", sans-serif;
}
.search input::placeholder {
  color: #d2d8d9;
  opacity: 1;
}
.tray {
  display: flex;
  align-items: center;
  justify-content: flex-end;
  gap: 12px;
  padding-right: 32px;
}
.tray .cloud {
  margin: 0 16px;
}
.lang {
  margin-right: 14px;
}
.clock {
  margin-left: 16px;
  text-align: right;
}
</style>
